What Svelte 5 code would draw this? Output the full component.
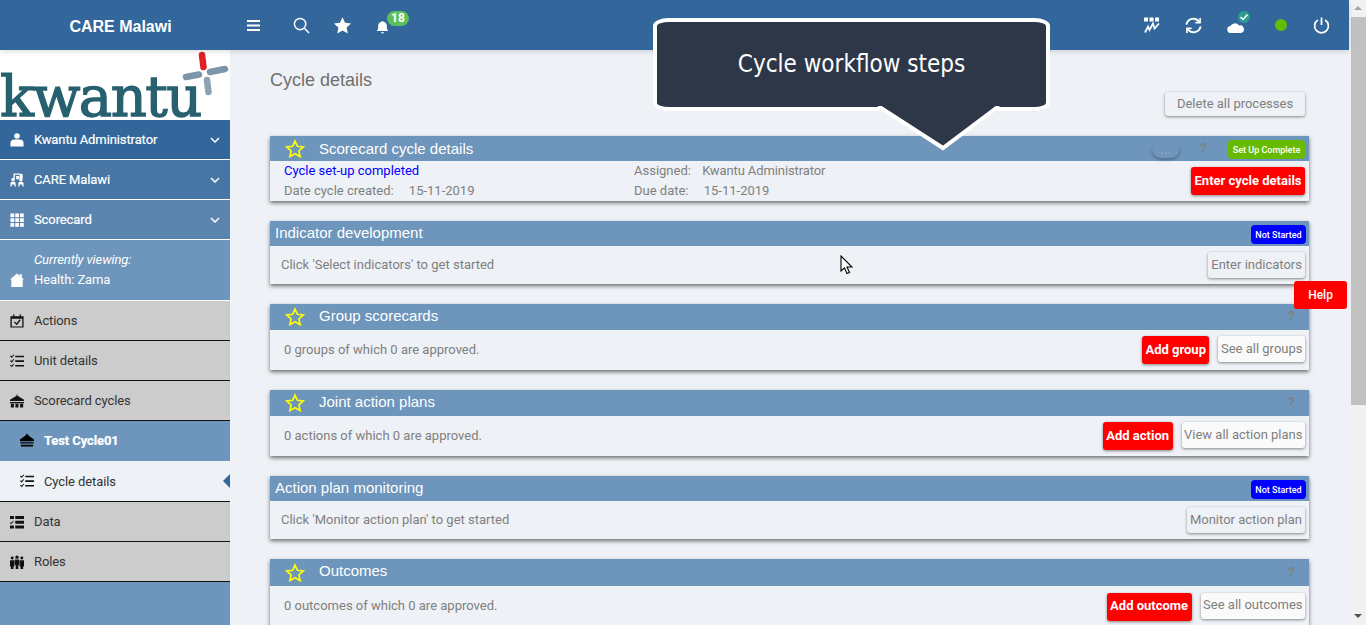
<script>
  const nav = [
    { label: 'Kwantu Administrator', icon: 'user', cls: 'c1' },
    { label: 'CARE Malawi', icon: 'org', cls: 'c2' },
    { label: 'Scorecard', icon: 'grid', cls: 'c3' }
  ];

  const lower = [
    { label: 'Actions', icon: 'cal' },
    { label: 'Unit details', icon: 'list' },
    { label: 'Scorecard cycles', icon: 'bank' }
  ];

  const cards = [
    { title: 'Indicator development', badge: 'Not Started', text: "Click 'Select indicators' to get started", buttons: [{ label: 'Enter indicators' }] },
    { title: 'Group scorecards', star: true, text: '0 groups of which 0 are approved.', buttons: [{ label: 'Add group', red: true }, { label: 'See all groups', pale: true }] },
    { title: 'Joint action plans', star: true, text: '0 actions of which 0 are approved.', buttons: [{ label: 'Add action', red: true }, { label: 'View all action plans', pale: true }] },
    { title: 'Action plan monitoring', badge: 'Not Started', text: "Click 'Monitor action plan' to get started", buttons: [{ label: 'Monitor action plan' }] },
    { title: 'Outcomes', star: true, text: '0 outcomes of which 0 are approved.', buttons: [{ label: 'Add outcome', red: true }, { label: 'See all outcomes', pale: true }] }
  ];
</script>

{#snippet icon(name, color)}
  <svg class="ico" viewBox="0 0 16 16" fill={color}>
    {#if name === 'user'}
      <circle cx="8" cy="3.500" r="3.200" /><path d="M.5 15.500v-4Q.5 7.500 5 7.500h6q4.500 0 4.500 4v4z" />
    {:else if name === 'org'}
      <path d="M4 .5h8v1.500H5.500V6.500H4zM11 1h3.500v5H11zM7 3.500h3.500V7H7z" />
      <circle cx="3.500" cy="7.500" r="2" /><circle cx="12.500" cy="7.500" r="2" />
      <path d="M.5 15.500V12.500q0-2.800 3-2.800t3 2.800v3H5v-2.500H2v2.500zM9.500 15.500V12.500q0-2.800 3-2.800t3 2.800v3H14v-2.500h-3v2.500z" />
    {:else if name === 'grid'}
      {#each [0.5, 6, 11.500] as y}
        {#each [0.5, 6, 11.500] as x}
          <rect {x} {y} width="4.300" height="4.300" />
        {/each}
      {/each}
    {:else if name === 'home'}
      <path d="M8 .5 11 3V1.500h2.500V5.200L16 7.500h-1.500V16h-13V7.500H0z" />
    {:else if name === 'cal'}
      <path fill-rule="evenodd" d="M.5 2.500h3V.5H5v2h6v-2h1.500v2h3v13H.5zM2 5.500v8.700h12V5.500z" />
      <path d="m4.500 9.500 1-1 2 2 3.500-4.500 1.200 1-4.500 5.800z" />
    {:else if name === 'list'}
      <path d="M6 2h10v1.800H6zM6 7.200h10V9H6zM6 12.500h10v1.800H6zM1 1.800l1 1 2-2.300.8.700L2 4.700 0 2.700zM1 7l1 1 2-2.300.8.700L2 9.900 0 7.900zM1 12.300l1 1 2-2.300.8.700L2 15.200 0 13.200z" />
    {:else if name === 'bank'}
      <path d="M7.500.5h1V2L16 6.500V8H0V6.500L7.500 2zM0 9h16v1.500H0zM1 11h3.500v4.500H1zM6.200 11h3.500v4.500H6.200zM11.500 11H15v4.500h-3.500z" />
    {:else if name === 'cycle'}
      <path d="M8 .5 10 3l6 4.500V9.500H0V7.500L6 3zM.5 10.500h15V12H.5zM1 13.500h14V15.500H1z" />
    {:else if name === 'data'}
      <path d="M6 1h10v3.500H6zM6 6.500h10V10H6zM6 12h10v3.500H6zM0 1h4.500v3.500H0zM0 12h4.500v3.500H0zM0 8l1.200 1L3.500 6.500l.8.800L1.200 10.500 0 9.200z" />
    {:else if name === 'roles'}
      <circle cx="2.500" cy="3.500" r="1.700" /><circle cx="8" cy="2.500" r="1.900" /><circle cx="13.500" cy="3.500" r="1.700" />
      <path d="M0 6h5v7H4v3H1v-3H0zM5.500 5h5v6.500h-1V16h-3v-4.500h-1zM11 6h5v7h-1v3h-3v-3h-1z" />
    {/if}
  </svg>
{/snippet}

{#snippet star()}
  <svg class="star" viewBox="0 0 24 24" fill="none" stroke="#ffff00" stroke-width="2">
    <path d="m12 2.500 2.900 6.300 6.900.8-5.100 4.700 1.400 6.800-6.100-3.400-6.100 3.400 1.400-6.800-5.100-4.700 6.900-.8z" />
  </svg>
{/snippet}

<div class="page">
  <div class="content">
    <header>
      <div class="brand">CARE Malawi</div>
      <div class="tools">
        <svg class="burger" viewBox="0 0 13 11" fill="#fff"><path d="M0 0h13v2H0zM0 4.500h13v2H0zM0 9h13v2H0z" /></svg>
        <svg class="search" viewBox="0 0 18 18" fill="none" stroke="#fff" stroke-width="1.600"><circle cx="7.500" cy="7.500" r="6" /><path d="m12 12 5 5" /></svg>
        <svg class="fav" viewBox="0 0 24 24" fill="#fff"><path d="m12 1.500 3.200 7 7.600.9-5.600 5.200 1.500 7.500-6.700-3.800-6.700 3.800 1.500-7.500-5.600-5.200 7.600-.9z" /></svg>
        <div class="bell">
          <svg viewBox="0 0 14 16" fill="#fff"><path d="M7 1q1 0 1 1 4 .8 4 5v3l1.500 2.500H.5L2 10V7q0-4.200 4-5 0-1 1-1zM5 14h4q-.5 1.500-2 1.500T5 14z" /></svg>
          <span class="count">18</span>
        </div>
      </div>
      <div class="status">
        <svg class="chart" viewBox="0 0 16 16" fill="#fff">
          <path d="M0 0h4v4H0zM5.500 0h4v4h-4zM11 0h4v4h-4z" />
          <path d="m1 15 3-6 1.500 3.500L9 6l1.500 5L15 6" fill="none" stroke="#fff" stroke-width="1.700" />
        </svg>
        <svg class="sync" viewBox="0 0 18 18" fill="none" stroke="#fff" stroke-width="2">
          <path d="M1.500 8a7.500 7.500 0 0 1 13.500-3M16.500 10a7.500 7.500 0 0 1-13.500 3" />
          <path d="M16 1v5h-5M2 17v-5h5" stroke-width="1.700" />
        </svg>
        <div class="cloud">
          <svg viewBox="0 0 18 11" fill="#fff"><path d="M4 11a3.500 3.500 0 0 1-.5-7A5 5 0 0 1 12 3.500 3.800 3.800 0 0 1 14 11z" /></svg>
          <span class="tick">
            <svg viewBox="0 0 12 12" fill="none" stroke="#fff" stroke-width="1.500"><path d="m2.500 6 2.500 2.500 4.500-5" /></svg>
          </span>
        </div>
        <span class="dot"></span>
        <svg class="power" viewBox="0 0 18 18" fill="none" stroke="#fff" stroke-width="1.800"><path d="M5.200 3.200a7.300 7.300 0 1 0 7.600 0M9 .5v8" /></svg>
      </div>
    </header>

    <div class="body">
      <aside>
        <div class="logo">
          <span>kwantu</span>
          <svg viewBox="0 0 50 50">
            <g stroke-width="6.500" stroke-linecap="round">
              <path d="M22 5 23.500 17" stroke="#e01f26" />
              <path d="M6 27 19 24.500" stroke="#7c95a8" />
              <path d="M30 22 45 19" stroke="#7c95a8" />
              <path d="M27 30 28.500 42" stroke="#8da2b3" />
            </g>
          </svg>
        </div>

        {#each nav as item}
          <div class="nav {item.cls}">
            {@render icon(item.icon, '#fff')}
            <span>{item.label}</span>
            <svg class="chev" viewBox="0 0 10 6" fill="none" stroke="#fff" stroke-width="1.500"><path d="m1 1 4 4 4-4" /></svg>
          </div>
        {/each}

        <div class="viewing">
          {@render icon('home', '#fff')}
          <div>
            <em>Currently viewing:</em>
            <span>Health: Zama</span>
          </div>
        </div>

        {#each lower as item}
          <div class="nav grey">
            {@render icon(item.icon, '#111')}
            <span>{item.label}</span>
          </div>
        {/each}

        <div class="nav cycle">
          {@render icon('cycle', '#000')}
          <span>Test Cycle01</span>
        </div>
        <div class="nav current">
          {@render icon('list', '#111')}
          <span>Cycle details</span>
        </div>
        <div class="nav grey">
          {@render icon('data', '#111')}
          <span>Data</span>
        </div>
        <div class="nav grey">
          {@render icon('roles', '#111')}
          <span>Roles</span>
        </div>
      </aside>

      <main>
        <h1>Cycle details</h1>
        <div class="actions">
          <button class="btn">Delete all processes</button>
        </div>

        <section class="card">
          <div class="head first">
            {@render star()}
            <h2>Scorecard cycle details</h2>
            <span class="more">...</span>
            <span class="q early">?</span>
            <span class="badge green">Set Up Complete</span>
          </div>
          <div class="details">
            <div class="facts">
              <p class="link">Cycle set-up completed</p>
              <p>Date cycle created: <b>15-11-2019</b></p>
            </div>
            <div class="facts second">
              <p>Assigned: <b class="who">Kwantu Administrator</b></p>
              <p>Due date: <b>15-11-2019</b></p>
            </div>
            <button class="btn red">Enter cycle details</button>
          </div>
        </section>

        {#each cards as card}
          <section class="card">
            <div class="head" class:plain={!card.star}>
              {#if card.star}
                {@render star()}
              {/if}
              <h2>{card.title}</h2>
              {#if card.badge}
                <span class="badge blue">{card.badge}</span>
              {:else}
                <span class="q">?</span>
              {/if}
            </div>
            <div class="row" class:plain={!card.star}>
              <p>{card.text}</p>
              {#each card.buttons as b}
                <button class="btn" class:red={b.red} class:pale={b.pale}>{b.label}</button>
              {/each}
            </div>
          </section>
        {/each}
      </main>
    </div>
  </div>

  <div class="scrollbar">
    <span class="up"></span>
    <span class="thumb"></span>
    <span class="down"></span>
  </div>

  <div class="tip">
    <div class="bubble">Cycle workflow steps</div>
    <svg class="tail" viewBox="0 0 136 46">
      <path d="M3 0 68 42 124 0" fill="#2d3748" stroke="#fff" stroke-width="4" />
    </svg>
  </div>
  <button class="help">Help</button>
  <svg class="cursor" viewBox="0 0 13 20"><path d="M1 1v15l3.500-3.200 2.500 5.700 2.500-1-2.500-5.500H12z" fill="#fff" stroke="#000" stroke-width="1.100" /></svg>
</div>

<style>
  :global(body) {
    margin: 0;
    overflow: hidden;
    background: #eef1f6;
  }

  .page {
    position: relative;
    display: flex;
    height: 625px;
    overflow: hidden;
    font-family: Roboto, sans-serif;
    color: #808080;
  }

  .content {
    flex: 1;
    min-width: 0;
  }

  header {
    display: flex;
    align-items: center;
    height: 50px;
    background: #33669a;
    color: #fff;
    box-shadow: 0 2px 5px rgba(0, 0, 0, 0.12);
    position: relative;
    z-index: 1;
  }

  .brand {
    width: 230px;
    padding: 3px 0 0 11px;
    box-sizing: border-box;
    text-align: center;
    font: bold 16px "Liberation Sans", sans-serif;
  }

  .tools {
    display: flex;
    align-items: center;
    padding-left: 17px;
  }

  .burger {
    display: block;
    width: 13px;
    height: 11px;
  }

  .search {
    display: block;
    width: 17px;
    height: 17px;
    margin-left: 33px;
  }

  .fav {
    display: block;
    width: 19px;
    height: 19px;
    margin-left: 23px;
  }

  .bell {
    position: relative;
    margin: 4px 0 0 24px;
    width: 13px;
    height: 14px;
  }

  .bell svg {
    display: block;
    width: 13px;
    height: 14px;
  }

  .count {
    position: absolute;
    left: 11px;
    top: -9px;
    width: 22px;
    height: 15px;
    border-radius: 8px;
    background: #5cc05c;
    font-size: 12px;
    font-weight: 700;
    line-height: 15px;
    text-align: center;
  }

  .status {
    display: flex;
    align-items: center;
    margin-left: auto;
    padding-right: 19px;
  }

  .chart {
    display: block;
    width: 16px;
    height: 17px;
    margin-right: -1px;
  }

  .sync {
    display: block;
    width: 17px;
    height: 17px;
    margin-left: 26px;
  }

  .cloud {
    position: relative;
    width: 18px;
    height: 11px;
    margin: 5px 0 0 25px;
  }

  .cloud > svg {
    display: block;
    width: 18px;
    height: 11px;
  }

  .tick {
    position: absolute;
    left: 11px;
    top: -11px;
    width: 12px;
    height: 12px;
    border-radius: 50%;
    background: #2a9d8f;
  }

  .tick svg {
    display: block;
  }

  .dot {
    width: 12px;
    height: 12px;
    border-radius: 50%;
    background: #66bb00;
    margin-left: 30px;
  }

  .power {
    display: block;
    width: 17px;
    height: 17px;
    margin-left: 26px;
  }

  .body {
    display: flex;
    height: 575px;
  }

  aside {
    flex: none;
    width: 230px;
    background: #6e95bb;
    font-size: 13px;
    letter-spacing: -0.1px;
  }

  .logo {
    position: relative;
    height: 70px;
    background: #fff;
  }

  .logo span {
    position: absolute;
    left: 0;
    bottom: 0;
    font: 56px/46px "DejaVu Serif", serif;
    letter-spacing: -1.500px;
    color: #27606f;
    -webkit-text-stroke: 1.300px #27606f;
  }

  .logo svg {
    position: absolute;
    left: 180px;
    top: 0;
    width: 50px;
    height: 50px;
  }

  .nav {
    display: flex;
    align-items: center;
    height: 39px;
    padding-left: 10px;
    border-bottom: 1px solid #fff;
    color: #fff;
    -webkit-text-stroke: 0.2px currentColor;
  }

  .nav span {
    margin-left: 10px;
  }

  .ico {
    display: block;
    flex: none;
    width: 14px;
    height: 14px;
  }

  .chev {
    width: 10px;
    height: 6px;
    margin-left: auto;
    margin-right: 10px;
  }

  .c1 {
    background: #33669a;
  }

  .c2 {
    background: #4775a4;
  }

  .c3 {
    background: #5b85af;
  }

  .viewing {
    display: flex;
    align-items: flex-end;
    height: 61px;
    padding: 0 0 10px 10px;
    box-sizing: border-box;
    border-bottom: 1px solid #fff;
    color: #fff;
    line-height: 20px;
  }

  .viewing > div {
    margin-left: 10px;
  }

  .viewing em,
  .viewing span {
    display: block;
  }

  .viewing .ico {
    margin-bottom: 3px;
  }

  .grey {
    background: #cccccc;
    color: #333;
    border-bottom: 1px solid #111;
    -webkit-text-stroke: 0;
  }

  .cycle {
    height: 38px;
    padding: 0 0 2px 20px;
    background: #6e95bb;
    border: 0;
    font-weight: 700;
  }

  .current {
    height: 40px;
    padding-left: 20px;
    background: #eef1f6;
    color: #333;
    border-bottom: 1px solid #111;
    position: relative;
    -webkit-text-stroke: 0;
  }

  .current::after {
    content: '';
    position: absolute;
    right: 0;
    top: 13px;
    border: 7px solid transparent;
    border-left: 0;
    border-right: 7px solid #33669a;
  }

  main {
    flex: 1;
    min-width: 0;
    padding: 0 40px;
    overflow: hidden;
  }

  h1 {
    margin: 19px 0 0;
    font: 400 18px/22px "Liberation Sans", sans-serif;
    color: #707070;
  }

  .actions {
    display: flex;
    justify-content: flex-end;
    margin-top: 1px;
    padding-right: 4px;
    height: 44px;
  }

  .btn {
    flex: none;
    height: 26px;
    padding: 0 3px 2px;
    border: 0;
    border-radius: 3px;
    background: #eef1f6;
    color: #808080;
    font: 13px Roboto, sans-serif;
    box-shadow: 0 1px 3px rgba(0, 0, 0, 0.45);
    white-space: nowrap;
  }

  .actions .btn {
    width: 140px;
    height: 24px;
  }

  .btn.red {
    height: 28px;
    padding: 0 3.500px 2px;
    background: #ff0000;
    color: #fff;
    font-weight: 700;
  }

  .btn.pale {
    margin-bottom: 2px;
    padding: 0 2.500px 2px;
    background: #fafafa;
  }

  .card {
    margin-bottom: 20px;
    background: #eef1f6;
    box-shadow: 0 2px 4px rgba(0, 0, 0, 0.55);
  }

  .head {
    display: flex;
    align-items: center;
    height: 26px;
    padding: 0 4px 0 15px;
    background: #6e95bb;
    color: #fff;
  }

  .head.first {
    height: 25px;
  }

  .head.plain {
    height: 25px;
    padding-left: 5px;
  }

  .head h2 {
    margin: 0;
    padding-bottom: 4px;
    font: 400 15px "Liberation Sans", sans-serif;
    color: #fff;
  }

  .head.first h2 {
    padding-bottom: 0;
  }

  .head.plain h2 {
    padding-bottom: 2px;
  }

  .star {
    flex: none;
    width: 20px;
    height: 20px;
    margin-right: 14px;
  }

  .more {
    width: 28px;
    height: 18px;
    margin-left: auto;
    border-radius: 9px;
    background: #6e95bb;
    box-shadow: 0 2px 3px rgba(0, 0, 0, 0.25);
    color: #93a3b3;
    font-size: 13px;
    font-weight: 700;
    line-height: 19px;
    text-align: center;
  }

  .q {
    margin-left: auto;
    padding: 0 10px 2px 0;
    font: bold 12px "Liberation Sans", sans-serif;
    color: #808080;
  }

  .q.early {
    margin-left: 20px;
    padding-right: 21px;
  }

  .badge {
    margin-top: 2px;
    border-radius: 4px;
    color: #fff;
    font: 500 9px/20px Roboto, sans-serif;
    white-space: nowrap;
    text-align: center;
    height: 19px;
  }

  .plain .badge {
    margin-left: auto;
  }

  .badge.green {
    width: 77px;
    background: #66bb00;
  }

  .badge.blue {
    width: 55px;
    margin-right: -1px;
    background: #0000ff;
  }

  .details {
    display: flex;
    align-items: center;
    height: 40px;
    padding: 0 4px 0 14px;
  }

  .facts {
    width: 350px;
  }

  .facts p {
    margin: 0;
    font-size: 13px;
    line-height: 20px;
  }

  .facts b {
    font-weight: 400;
    margin-left: 12px;
  }

  .facts b.who {
    margin-left: 8px;
    letter-spacing: -0.1px;
  }

  .facts .link {
    color: #0000ff;
  }

  .second {
    width: auto;
  }

  .details .btn {
    margin-left: auto;
  }

  .row {
    display: flex;
    align-items: center;
    gap: 9px;
    height: 40px;
    padding: 0 4px 0 14px;
  }

  .row.plain {
    height: 38px;
    padding-left: 11px;
  }

  .row p {
    margin: 0 auto 2px 0;
    font-size: 13px;
  }

  .card:last-child .head {
    height: 27px;
  }

  .card:last-child .row {
    height: 41px;
  }

  .scrollbar {
    flex: none;
    display: flex;
    flex-direction: column;
    width: 17px;
    background: #f1f1f1;
  }

  .thumb {
    height: 388px;
    margin-left: 2px;
    background: #c1c1c1;
  }

  .up,
  .down {
    height: 17px;
    position: relative;
  }

  .down {
    margin-top: auto;
  }

  .up::after,
  .down::after {
    content: '';
    position: absolute;
    left: 5px;
    top: 6px;
    border: 4px solid transparent;
    border-top: 0;
    border-bottom: 4px solid #a3a3a3;
  }

  .down::after {
    border-bottom: 0;
    border-top: 4px solid #505050;
  }

  .tip {
    position: absolute;
    left: 653px;
    top: 18px;
    width: 397px;
    z-index: 2;
  }

  .bubble {
    box-sizing: border-box;
    height: 93px;
    padding-top: 24px;
    border: 4px solid #fff;
    border-radius: 16px / 8px;
    background: #2d3748;
    color: #fff;
    font: 24px/36px "DejaVu Sans", sans-serif;
    font-stretch: condensed;
    text-align: center;
  }

  .tail {
    position: absolute;
    left: 222px;
    top: 88px;
    width: 136px;
    height: 46px;
  }

  .help {
    position: absolute;
    left: 1294px;
    top: 281px;
    width: 53px;
    height: 28px;
    border: 0;
    border-radius: 3px;
    background: #ff0000;
    color: #fff;
    font: 500 12px Roboto, sans-serif;
    z-index: 2;
  }

  .cursor {
    position: absolute;
    left: 840px;
    top: 255px;
    width: 13px;
    height: 20px;
    z-index: 3;
  }
</style>
